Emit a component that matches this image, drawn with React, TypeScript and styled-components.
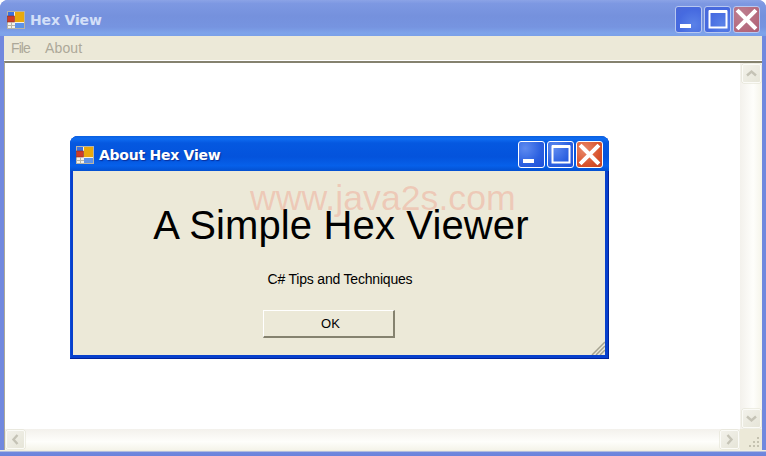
import React from "react";
import styled, { createGlobalStyle } from "styled-components";

const Global = createGlobalStyle`
  html, body { margin: 0; padding: 0; background: #fff; }
  #root { width: 766px; height: 456px; overflow: hidden; }
`;

const Win = styled.div`
  position: relative;
  width: 766px;
  height: 456px;
  box-sizing: border-box;
  display: flex;
  flex-direction: column;
  background: #7188de;
  border-radius: 8px 8px 0 0;
  overflow: hidden;
  font-family: "Liberation Sans", Arial, sans-serif;
`;

const TitleBar = styled.div<{ $active?: boolean }>`
  display: flex;
  align-items: center;
  flex: none;
  box-sizing: border-box;
  height: ${p => (p.$active ? 35 : 36)}px;
  padding: ${p => (p.$active ? "2px 6px 0 6px" : "3px 6px 0 7px")};
  background: ${p =>
    p.$active
      ? "linear-gradient(180deg,#0a5fe0 0%,#0f6cf0 8%,#0558e0 20%,#0453dc 60%,#0660ea 85%,#0350d0 100%)"
      : "linear-gradient(180deg,#8ba3e6 0%,#7d98e2 10%,#7591dd 45%,#7694e0 75%,#7ea3ea 92%,#7aa0e8 100%)"};
`;

const AppIcon = styled.svg`
  flex: none;
  width: 18px;
  height: 18px;
  margin-right: 5px;
`;

const TitleText = styled.span<{ $active?: boolean }>`
  flex: 1;
  font-family: "DejaVu Sans", Verdana, sans-serif;
  font-weight: 700;
  font-size: 14px;
  letter-spacing: ${p => (p.$active ? -0.25 : -0.15)}px;
  color: ${p => (p.$active ? "#fff" : "#d3dff8")};
  text-shadow: ${p => (p.$active ? "1px 1px 1px #0a2f9a" : "none")};
`;

const CapButton = styled.div<{ $kind: string; $active?: boolean }>`
  flex: none;
  width: 27px;
  height: 27px;
  box-sizing: border-box;
  margin-left: 2px;
  border-radius: 3px;
  border: 1px solid ${p => (p.$active ? "#fff" : "#b8c8f0")};
  background: ${p =>
    p.$kind === "close"
      ? p.$active
        ? "radial-gradient(circle at 30% 30%,#e98a6c,#d9542e 60%,#c5411f)"
        : "radial-gradient(circle at 30% 30%,#bd7f90,#b4687c 70%,#a85e78)"
      : p.$active
      ? "radial-gradient(circle at 25% 25%,#5f8bf0,#2a5fe0 60%,#2050d8)"
      : "radial-gradient(circle at 70% 70%,#5a82e8,#466ae0 60%,#4a68d8)"};
  display: flex;
  align-items: center;
  justify-content: center;
  svg { display: block; }
`;

const Menu = styled.div`
  flex: none;
  display: flex;
  align-items: center;
  box-sizing: border-box;
  height: 25px;
  margin: 0 4px;
  padding: 0 0 1px 7px;
  gap: 15px;
  background: #ece9d8;
  border-bottom: 1px solid #fff;
  font-size: 14px;
  color: #aca899;
`;

const MenuItem = styled.span<{ $tight?: boolean }>`
  letter-spacing: ${p => (p.$tight ? -0.9 : 0.15)}px;
`;

const Client = styled.div`
  flex: none;
  display: grid;
  grid-template-columns: 1fr 22px;
  grid-template-rows: 1fr 21px;
  height: 389px;
  margin: 0 4px;
  box-sizing: border-box;
  border-top: 2px solid #85826f;
  border-left: 1px solid #aca899;
  background: #fff;
`;

const Pane = styled.div`
  background: #fff;
`;

const VTrack = styled.div`
  background: linear-gradient(90deg,#f3f1ec,#fefefb 60%,#f5f4ea);
  display: flex;
  flex-direction: column;
  justify-content: space-between;
  align-items: center;
`;

const HTrack = styled.div`
  background: linear-gradient(180deg,#f3f1ec,#fefefb 60%,#f5f4ea);
  display: flex;
  justify-content: space-between;
  align-items: center;
`;

const ScrollBtn = styled.div`
  width: 19px;
  height: 19px;
  flex: none;
  box-sizing: border-box;
  margin: 1px;
  border: 1px solid #fbfbf7;
  border-radius: 2px;
  background: linear-gradient(135deg,#f2f1ea,#e6e5d8);
  box-shadow: 0 0 0 0.5px #e0dfd0;
  display: flex;
  align-items: center;
  justify-content: center;
`;

const Corner = styled.div`
  background: #ece9d8;
  display: flex;
  align-items: flex-end;
  justify-content: flex-end;
  padding: 0 2px 2px 0;
`;

const BottomEdge = styled.div`
  flex: 1;
  margin: 0 0;
  background: linear-gradient(180deg,#f0eee0 0,#f0eee0 1px,#7188de 2px,#6a82dc 100%);
`;

const Dialog = styled.div`
  position: absolute;
  left: 70px;
  top: 136px;
  width: 539px;
  height: 223px;
  box-sizing: border-box;
  display: flex;
  flex-direction: column;
  border-radius: 8px 8px 0 0;
  overflow: hidden;
  background: #0740cc;
  box-shadow: inset -1px -1px 0 #00229c, inset 1px 0 0 #0a4ad8;
`;

const DialogBody = styled.div`
  flex: 1;
  position: relative;
  margin: 0 4px 4px 3px;
  background: #ece9d8;
  display: flex;
  flex-direction: column;
  align-items: center;
`;

const Headline = styled.div`
  margin-top: 31px;
  margin-left: 4px;
  font-size: 40px;
  letter-spacing: 0.14px;
  line-height: 46px;
  color: #000;
  white-space: nowrap;
`;

const Watermark = styled.div`
  position: absolute;
  left: 177px;
  top: 7px;
  font-size: 35.7px;
  line-height: 41px;
  color: rgba(240, 120, 100, 0.28);
  white-space: nowrap;
`;

const Sub = styled.div`
  margin-top: 23px;
  margin-left: 2px;
  font-size: 14px;
  line-height: 16px;
  letter-spacing: -0.2px;
  color: #000;
`;

const OkButton = styled.div`
  margin-top: 23px;
  margin-left: -21px;
  width: 132px;
  height: 28px;
  box-sizing: border-box;
  padding-left: 5px;
  border-style: solid;
  border-width: 1px 2px 2px 1px;
  border-color: #fff #85826f #85826f #fff;
  background: #ece9d8;
  display: flex;
  align-items: center;
  justify-content: center;
  font-size: 13px;
  color: #000;
`;

const Grip = styled.svg`
  position: absolute;
  right: 0;
  bottom: 0;
`;

const Icon = () => (
  <AppIcon viewBox="0 0 18 18">
    <rect x="0.5" y="0.5" width="17" height="17" fill="#f4f2ea" stroke="#b8b4a6" />
    <rect x="1" y="1" width="6" height="4" fill="#3a70e0" />
    <rect x="8" y="1" width="9" height="10" fill="#e9a90d" />
    <rect x="0.5" y="5" width="7" height="6" fill="#cf3b28" stroke="#8a2a20" strokeWidth="0.6" />
    <rect x="8" y="12" width="9" height="5" fill="#5d92e8" />
    <line x1="4.5" y1="11" x2="4.5" y2="18" stroke="#b8b4a6" />
    <line x1="0" y1="14.5" x2="8" y2="14.5" stroke="#b8b4a6" />
  </AppIcon>
);

const MinGlyph = ({ c }: { c: string }) => (
  <svg width="25" height="25" viewBox="0 0 25 25"><rect x="4" y="17" width="11" height="4" fill={c} /></svg>
);
const MaxGlyph = ({ c }: { c: string }) => (
  <svg width="25" height="25" viewBox="0 0 25 25">
    <rect x="4.5" y="4.5" width="17" height="16" fill="none" stroke={c} strokeWidth="2" />
    <rect x="4" y="3" width="18" height="3" fill={c} />
  </svg>
);
const CloseGlyph = () => (
  <svg width="25" height="25" viewBox="0 0 25 25">
    <path d="M4.5 4.5L20.5 20.5M20.5 4.5L4.5 20.5" stroke="#fff" strokeWidth="4" strokeLinecap="square" fill="none" />
  </svg>
);

const Chev = ({ d }: { d: string }) => (
  <svg width="13" height="13" viewBox="0 0 13 13">
    <path d={d} fill="none" stroke="#c5c3b6" strokeWidth="2.4" />
  </svg>
);

const Caption = ({ active, title }: { active?: boolean; title: string }) => (
  <TitleBar $active={active}>
    <Icon />
    <TitleText $active={active}>{title}</TitleText>
    <CapButton $kind="min" $active={active}><MinGlyph c="#fff" /></CapButton>
    <CapButton $kind="max" $active={active}><MaxGlyph c="#fff" /></CapButton>
    <CapButton $kind="close" $active={active}><CloseGlyph /></CapButton>
  </TitleBar>
);

export default function App() {
  return (
    <>
      <Global />
      <Win>
        <Caption title="Hex View" />
        <Menu>
          <MenuItem $tight>File</MenuItem>
          <MenuItem>About</MenuItem>
        </Menu>
        <Client>
          <Pane />
          <VTrack>
            <ScrollBtn><Chev d="M2 8.5L6.5 4.5L11 8.5" /></ScrollBtn>
            <ScrollBtn><Chev d="M2 4.5L6.5 8.5L11 4.5" /></ScrollBtn>
          </VTrack>
          <HTrack>
            <ScrollBtn><Chev d="M8.5 2L4.5 6.5L8.5 11" /></ScrollBtn>
            <ScrollBtn><Chev d="M4.5 2L8.5 6.5L4.5 11" /></ScrollBtn>
          </HTrack>
          <Corner>
            <svg width="12" height="12" viewBox="0 0 12 12" fill="#c5c2b0">
              <rect x="9" y="1" width="2" height="2" /><rect x="5" y="5" width="2" height="2" /><rect x="9" y="5" width="2" height="2" />
              <rect x="1" y="9" width="2" height="2" /><rect x="5" y="9" width="2" height="2" /><rect x="9" y="9" width="2" height="2" />
            </svg>
          </Corner>
        </Client>
        <BottomEdge />
        <Dialog>
          <Caption active title="About Hex View" />
          <DialogBody>
            <Watermark>www.java2s.com</Watermark>
            <Headline>A Simple Hex Viewer</Headline>
            <Sub>C# Tips and Techniques</Sub>
            <OkButton>OK</OkButton>
            <Grip width="14" height="14" viewBox="0 0 14 14">
              <path d="M1 14L14 1M5 14L14 5M9 14L14 9" stroke="#a5a290" strokeWidth="1.5" fill="none" />
            </Grip>
          </DialogBody>
        </Dialog>
      </Win>
    </>
  );
}
